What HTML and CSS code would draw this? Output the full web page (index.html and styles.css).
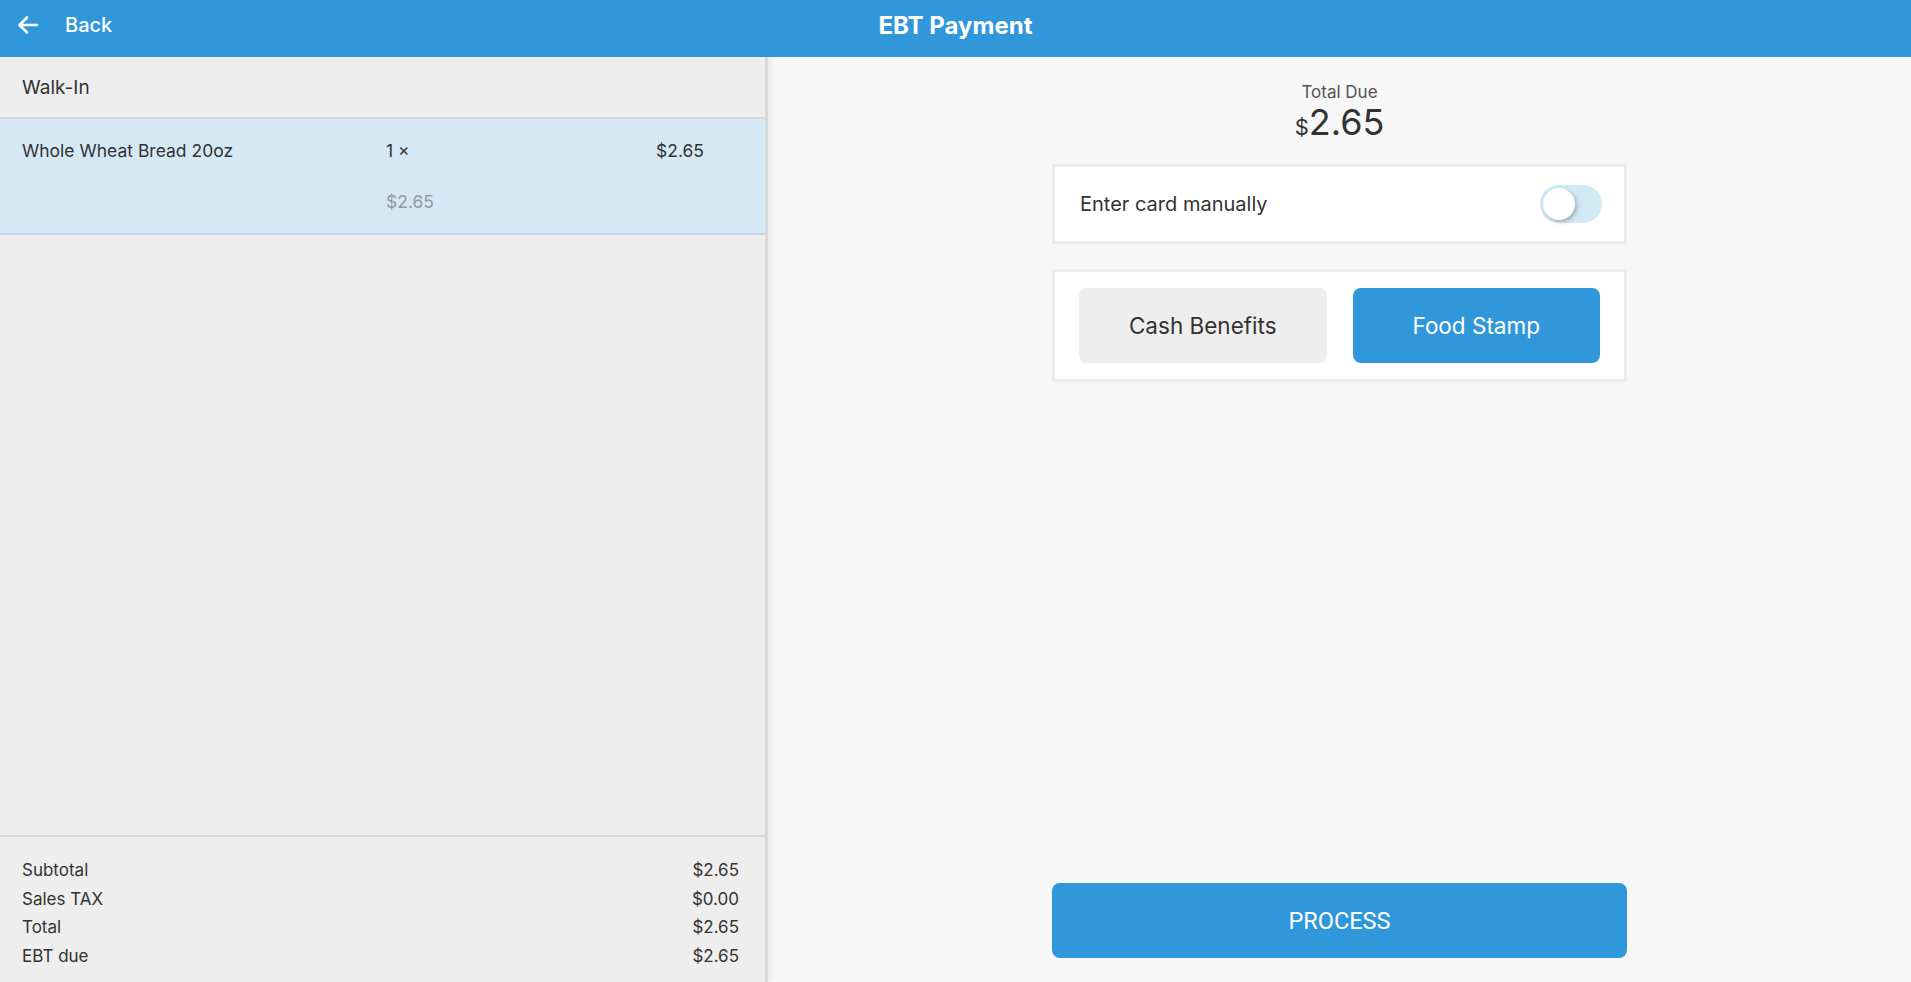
FILE: index.html
```html
<!DOCTYPE html>
<html lang="en">
<head>
    <meta charset="UTF-8">
    <meta name="viewport" content="width=device-width, initial-scale=1.0">
    <title>EBT Payment</title>
    <link rel="stylesheet" href="styles.css">
</head>
<body>
    <header class="topbar">
        <a class="back" href="#">
            <svg class="back-icon" width="22" height="20" viewBox="0 0 22 20">
                <path d="M20 10H3M10 2.5L2.5 10L10 17.5" fill="none" stroke="#fff" stroke-width="2.6" stroke-linecap="round" stroke-linejoin="round"/>
            </svg>
            <span>Back</span>
        </a>
        <h1 class="title">EBT Payment</h1>
    </header>

    <div class="main">
        <aside class="order">
            <div class="customer">Walk-In</div>

            <div class="item">
                <div class="item-name">Whole Wheat Bread 20oz</div>
                <div class="item-qty">1 ×</div>
                <div class="item-price">$2.65</div>
                <div></div>
                <div class="item-unit">$2.65</div>
            </div>

            <div class="spacer"></div>

            <div class="totals">
                <div class="total-row"><span>Subtotal</span><span>$2.65</span></div>
                <div class="total-row"><span>Sales TAX</span><span>$0.00</span></div>
                <div class="total-row"><span>Total</span><span>$2.65</span></div>
                <div class="total-row"><span>EBT due</span><span>$2.65</span></div>
            </div>
        </aside>

        <section class="payment">
            <div class="due-label">Total Due</div>
            <div class="due-amount"><span class="currency">$</span>2.65</div>

            <div class="card manual">
                <span>Enter card manually</span>
                <label class="toggle">
                    <input type="checkbox">
                    <span class="track"><span class="thumb"></span></span>
                </label>
            </div>

            <div class="card types">
                <button class="type-btn">Cash Benefits</button>
                <button class="type-btn active">Food Stamp</button>
            </div>

            <button class="process-btn">PROCESS</button>
        </section>
    </div>
</body>
</html>
```

FILE: styles.css
```css
* {
    box-sizing: border-box;
}

html, body {
    height: 100%;
}

body {
    margin: 0;
    font-family: Inter, "Noto Sans", sans-serif;
    color: #333;
    display: flex;
    flex-direction: column;
    overflow: hidden;
}

.topbar {
    height: 57px;
    padding-bottom: 7px;
    background-color: #3098da;
    color: white;
    display: flex;
    align-items: center;
    position: relative;
    flex-shrink: 0;
}

.back {
    display: flex;
    align-items: center;
    color: white;
    text-decoration: none;
    font-size: 20px;
    font-weight: 500;
    padding-left: 17px;
}

.back-icon {
    margin-right: 26px;
}

.title {
    position: absolute;
    left: 0;
    right: 0;
    margin: 0;
    text-align: center;
    font-size: 24px;
    font-weight: 700;
    pointer-events: none;
}

.main {
    flex: 1;
    display: flex;
    min-height: 0;
}

.order {
    width: 768px;
    background-color: #eeeeee;
    border-right: 3px solid #d9d9d9;
    box-shadow: 3px 0 5px rgba(0, 0, 0, 0.06);
    display: flex;
    flex-direction: column;
    position: relative;
    z-index: 1;
}

.customer {
    height: 62px;
    padding-left: 22px;
    display: flex;
    align-items: center;
    font-size: 19px;
    border-bottom: 2px solid #d8d8d8;
}

.item {
    display: grid;
    grid-template-columns: 364px 270px auto;
    row-gap: 25px;
    padding: 19px 22px 18px;
    background-color: #d5e8f5;
    border-bottom: 2px solid #c3d7e4;
    font-size: 17.5px;
    line-height: 26px;
}

.item-unit {
    color: #8f9aa3;
}

.spacer {
    flex: 1;
}

.totals {
    border-top: 2px solid #d8d8d8;
    padding: 19px 26px 12px 22px;
    font-size: 17px;
}

.total-row {
    display: flex;
    justify-content: space-between;
    line-height: 28.5px;
}

.payment {
    flex: 1;
    background-color: #f7f7f7;
    display: flex;
    flex-direction: column;
    align-items: center;
    padding-top: 25px;
    padding-bottom: 24px;
}

.due-label {
    font-size: 17px;
    color: #555;
    line-height: 20px;
}

.due-amount {
    font-size: 36px;
    line-height: 40px;
    color: #333;
}

.currency {
    font-size: 22px;
}

.card {
    width: 575px;
    background-color: white;
    border: 3px solid #ececec;
}

.manual {
    margin-top: 17px;
    height: 80px;
    display: flex;
    align-items: center;
    justify-content: space-between;
    padding: 0 22px 0 25px;
    font-size: 20px;
}

.toggle input {
    display: none;
}

.track {
    display: block;
    width: 62px;
    height: 38px;
    border-radius: 19px;
    background-color: #d1e9f5;
    position: relative;
}

.thumb {
    position: absolute;
    left: 3px;
    top: 3px;
    width: 32px;
    height: 32px;
    border-radius: 50%;
    background-color: white;
    box-shadow: 2px 2px 4px rgba(0, 0, 0, 0.25);
}

.types {
    margin-top: 25px;
    height: 113px;
    display: flex;
    align-items: center;
    gap: 26px;
    padding: 0 24px 0 24px;
}

.type-btn {
    flex: 1;
    height: 75px;
    border: none;
    border-radius: 8px;
    background-color: #eeeeee;
    color: #333;
    font-family: Inter, "Noto Sans", sans-serif;
    font-size: 22.5px;
    cursor: pointer;
}

.type-btn.active {
    background-color: #3098da;
    color: white;
}

.process-btn {
    margin-top: auto;
    width: 575px;
    height: 75px;
    border: none;
    border-radius: 8px;
    background-color: #3098da;
    color: white;
    font-family: Roboto, Inter, sans-serif;
    font-size: 23.5px;
    cursor: pointer;
}
```
